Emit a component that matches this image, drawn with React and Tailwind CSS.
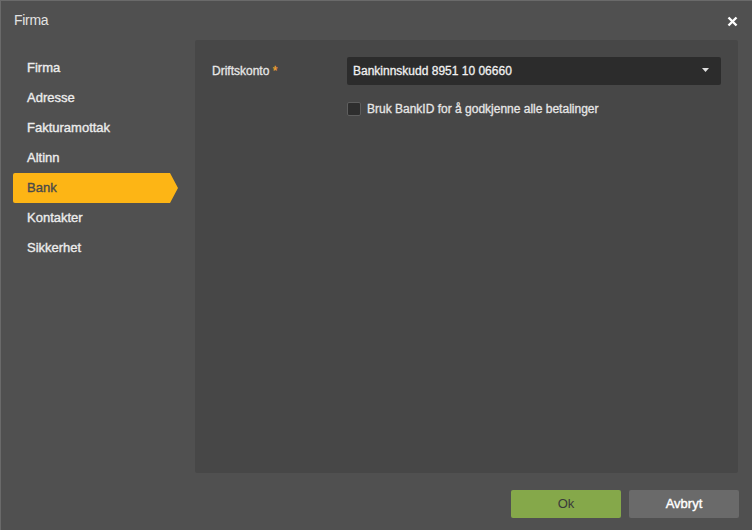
const MENU = ['Firma', 'Adresse', 'Fakturamottak', 'Altinn', 'Bank', 'Kontakter', 'Sikkerhet']

function MenuItem({ label, active }) {
  if (active) {
    return (
      <div className="h-[30px] w-[165px] flex items-center pl-[14px] bg-[#fdb515] text-[#4a4a4a] rounded-l-[2px] [clip-path:polygon(0_0,calc(100%-8px)_0,100%_50%,calc(100%-8px)_100%,0_100%)]">
        {label}
      </div>
    )
  }
  return <div className="h-[30px] w-[165px] flex items-center pl-[14px] text-[#ececec]">{label}</div>
}

export default function App() {
  return (
    <div className="w-[752px] h-[530px] bg-[#505050] border-t border-l border-[#6a6a6a] flex flex-col font-['Liberation_Sans',Arial,sans-serif] overflow-hidden">
      {/* title bar */}
      <div className="h-[39px] flex items-center justify-between pl-[13px] pr-[14px]">
        <span className="text-[14px] text-[#e2e2e2] tracking-[-0.3px]">Firma</span>
        <svg width="11" height="11" viewBox="0 0 11 11" className="mt-[1px]">
          <path d="M1.5 1.5 L9.5 9.5 M9.5 1.5 L1.5 9.5" stroke="#ffffff" strokeWidth="2.4" />
        </svg>
      </div>

      <div className="flex flex-1 min-h-0">
        {/* side menu */}
        <div className="w-[194px] pl-[12px] pt-[13px] text-[13px] [-webkit-text-stroke:0.35px]">
          {MENU.map(m => <MenuItem key={m} label={m} active={m === 'Bank'} />)}
        </div>

        {/* form panel */}
        <div className="flex-1 mr-[14px] bg-[#474747] rounded-[2px] pt-[17px] pl-[17px] pr-[17px] text-[12px] [-webkit-text-stroke:0.3px]">
          <div className="flex items-center">
            <div className="w-[135px] text-[#e6e6e6]">
              Driftskonto <span className="text-[#f0a030]">*</span>
            </div>
            <div className="flex-1 h-[28px] bg-[#2c2c2c] rounded-[2px] flex items-center justify-between pl-[6px] pr-[12px] text-[#f0f0f0]">
              <span>Bankinnskudd 8951 10 06660</span>
              <svg width="7" height="4" viewBox="0 0 7 4" className="-mt-[2px]">
                <path d="M0 0 H7 L3.5 4 Z" fill="#e0e0e0" />
              </svg>
            </div>
          </div>
          <div className="flex items-center gap-[6px] ml-[135px] mt-[15px]">
            <div className="w-[14px] h-[14px] bg-[#2e2e2e] border border-[#5e5e5e] rounded-[2px] [-webkit-text-stroke:0]" />
            <span className="text-[#e6e6e6]">Bruk BankID for å godkjenne alle betalinger</span>
          </div>
        </div>
      </div>

      {/* footer buttons */}
      <div className="h-[57px] flex justify-end items-start gap-[8px] pt-[17px] pr-[13px] text-[13px]">
        <button className="w-[110px] h-[28px] bg-[#85a84a] rounded-[2px] text-[#3a3a3a]">Ok</button>
        <button className="w-[110px] h-[28px] bg-[#6a6a6a] rounded-[2px] text-white [-webkit-text-stroke:0.4px]">Avbryt</button>
      </div>
    </div>
  )
}
